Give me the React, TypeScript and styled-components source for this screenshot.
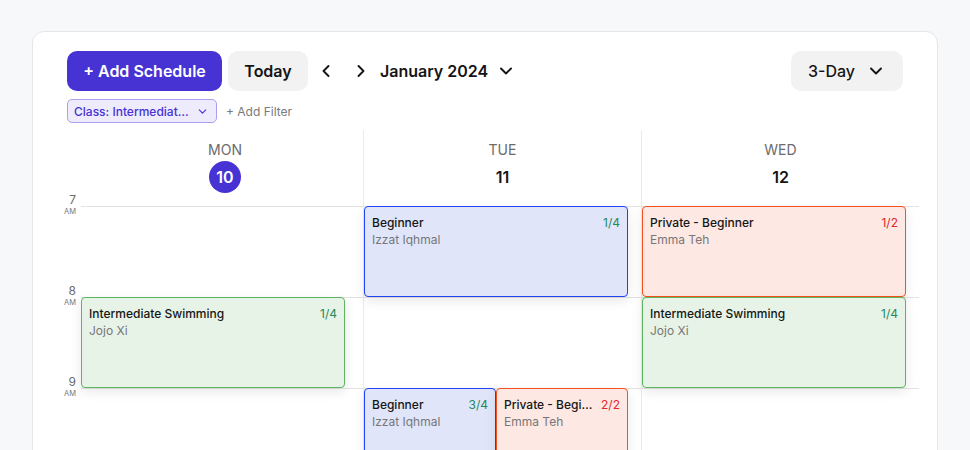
import React from 'react'
import styled, { createGlobalStyle } from 'styled-components'
import { ChevronDown, ChevronLeft, ChevronRight } from 'lucide-react'

type Tone = 'blue' | 'red' | 'green'

interface EventItem {
    title: string
    coach: string
    count: string
    tone: Tone
    countTone: 'green' | 'red'
}

interface Slot {
    row: number
    items: EventItem[]
}

interface Day {
    name: string
    date: string
    today?: boolean
    slots: Slot[]
}

const tones = {
    blue: { border: '#2143f2', bg: '#e0e5fa' },
    red: { border: '#f4511e', bg: '#fde8e3' },
    green: { border: '#5db562', bg: '#e8f3e7' },
}

const countColors = { green: '#1f8a5b', red: '#e1262d' }

const beginner: EventItem = { title: 'Beginner', coach: 'Izzat Iqhmal', count: '1/4', tone: 'blue', countTone: 'green' }
const swim: EventItem = { title: 'Intermediate Swimming', coach: 'Jojo Xi', count: '1/4', tone: 'green', countTone: 'green' }
const priv: EventItem = { title: 'Private - Beginner', coach: 'Emma Teh', count: '1/2', tone: 'red', countTone: 'red' }

const days: Day[] = [
    { name: 'Mon', date: '10', today: true, slots: [{ row: 2, items: [swim] }] },
    {
        name: 'Tue',
        date: '11',
        slots: [
            { row: 1, items: [beginner] },
            { row: 3, items: [{ ...beginner, count: '3/4' }, { ...priv, count: '2/2' }] },
        ],
    },
    { name: 'Wed', date: '12', slots: [{ row: 1, items: [priv] }, { row: 2, items: [swim] }] },
]

const hours = ['7', '8', '9', '10']

const App = () => {
    return (
        <>
            <GlobalStyle />
            <Card>
                <Toolbar>
                    <PrimaryButton>+ Add Schedule</PrimaryButton>
                    <GrayButton>Today</GrayButton>
                    <NavGroup>
                        <NavButton><ChevronLeft size={20} strokeWidth={2.3} /></NavButton>
                        <NavButton><ChevronRight size={20} strokeWidth={2.3} /></NavButton>
                    </NavGroup>
                    <MonthLabel>
                        January 2024
                        <ChevronDown size={20} strokeWidth={2.3} />
                    </MonthLabel>
                    <Spacer />
                    <ViewButton>
                        3-Day
                        <ChevronDown size={20} strokeWidth={2.3} />
                    </ViewButton>
                </Toolbar>
                <FilterRow>
                    <FilterChip>
                        <ChipText>Class: Intermediate Swimming</ChipText>
                        <ChevronDown size={13} strokeWidth={2} />
                    </FilterChip>
                    <AddFilter>+ Add Filter</AddFilter>
                </FilterRow>
                <Calendar>
                    <Gutter>
                        {hours.map(h => (
                            <HourLabel key={h}>
                                <HourNum>{h}</HourNum>
                                <HourAm>AM</HourAm>
                            </HourLabel>
                        ))}
                    </Gutter>
                    {days.map((d, i) => (
                        <DayColumn key={d.name} $divider={i > 0}>
                            <DayHeader $first={i === 0}>
                                <DayName>{d.name}</DayName>
                                <DayDate $today={d.today}>{d.date}</DayDate>
                            </DayHeader>
                            <DayBody>
                                {d.slots.map(s => (
                                    <SlotRow key={s.row} $row={s.row}>
                                        {s.items.map((e, j) => (
                                            <EventCard key={j} $tone={e.tone}>
                                                <EventTop>
                                                    <EventTitle>{e.title}</EventTitle>
                                                    <EventCount $tone={e.countTone}>{e.count}</EventCount>
                                                </EventTop>
                                                <EventCoach>{e.coach}</EventCoach>
                                            </EventCard>
                                        ))}
                                    </SlotRow>
                                ))}
                            </DayBody>
                        </DayColumn>
                    ))}
                </Calendar>
            </Card>
        </>
    )
}

const GlobalStyle = createGlobalStyle`
    html, body{
        margin:0;
        overflow:hidden;
        background:#f7f8fa;
        font-family: Inter, "Noto Sans", sans-serif;
    }
    body{
        padding:31px 32px 0 32px;
    }
    *{ box-sizing:border-box; }
`

const Card = styled.div`
    background:#fff;
    border:1px solid #e4e6ea;
    border-radius:12px;
    height:640px;
    padding:19px 34px 0 34px;
`
const Toolbar = styled.div`
    display:flex;
    align-items:center;
    height:40px;
`
const PrimaryButton = styled.button`
    height:40px;
    width:155px;
    border:none;
    border-radius:10px;
    background:#4733d4;
    color:#fff;
    font-family:inherit;
    font-size:16px;
    font-weight:600;
`
const GrayButton = styled.button`
    height:40px;
    width:80px;
    margin-left:6px;
    border:none;
    border-radius:10px;
    background:#f2f2f2;
    color:#151515;
    font-family:inherit;
    font-size:16px;
    font-weight:600;
`
const NavGroup = styled.div`
    display:flex;
    gap:7px;
    margin-left:4px;
`
const NavButton = styled.div`
    width:28px;
    height:40px;
    display:flex;
    align-items:center;
    justify-content:center;
    color:#151515;
`
const MonthLabel = styled.div`
    display:flex;
    align-items:center;
    gap:8px;
    margin-left:5px;
    font-size:16px;
    font-weight:600;
    color:#151515;
`
const Spacer = styled.div`
    flex:1;
`
const ViewButton = styled.div`
    height:40px;
    width:112px;
    display:flex;
    align-items:center;
    gap:11px;
    padding-left:17px;
    border-radius:10px;
    background:#f2f2f2;
    color:#151515;
    font-size:16px;
    font-weight:500;
`
const FilterRow = styled.div`
    display:flex;
    align-items:center;
    gap:9px;
    margin-top:8px;
    height:24px;
`
const FilterChip = styled.div`
    width:150px;
    height:24px;
    display:flex;
    align-items:center;
    gap:4px;
    padding:0 7px 0 6px;
    border:1px solid #a9a0ef;
    border-radius:5px;
    background:#eeebfc;
    color:#4733d4;
    font-size:12px;
    font-weight:500;
`
const ChipText = styled.span`
    flex:1;
    min-width:0;
    white-space:nowrap;
    overflow:hidden;
    text-overflow:ellipsis;
`
const AddFilter = styled.span`
    font-size:12px;
    color:#7a7a7a;
`
const Calendar = styled.div`
    display:grid;
    grid-template-columns:34px 282px 278px 278px;
    margin-top:7px;
    margin-left:-20px;
`
const Gutter = styled.div`
    display:flex;
    flex-direction:column;
    padding-top:63px;
`
const HourLabel = styled.div`
    height:91px;
    display:flex;
    flex-direction:column;
    align-items:flex-end;
    padding-right:5px;
    color:#6b6b6b;
`
const HourNum = styled.span`
    font-size:12px;
    line-height:14px;
`
const HourAm = styled.span`
    font-size:7.5px;
    line-height:10px;
    color:#777;
`
const DayColumn = styled.div<{ $divider: boolean }>`
    display:flex;
    flex-direction:column;
    border-left:${p => (p.$divider ? '1px solid #ebebeb' : 'none')};
`
const DayHeader = styled.div<{ $first: boolean }>`
    height:76px;
    display:flex;
    flex-direction:column;
    align-items:center;
    padding-top:10px;
    padding-left:${p => (p.$first ? '6px' : '0')};
    gap:1px;
`
const DayName = styled.span`
    font-size:14px;
    line-height:20px;
    text-transform:uppercase;
    color:#6b6b6b;
`
const DayDate = styled.span<{ $today?: boolean }>`
    width:32px;
    height:32px;
    border-radius:50%;
    display:flex;
    align-items:center;
    justify-content:center;
    font-size:16px;
    font-weight:600;
    background:${p => (p.$today ? '#4733d4' : 'transparent')};
    color:${p => (p.$today ? '#fff' : '#151515')};
`
const DayBody = styled.div`
    display:grid;
    grid-template-rows:repeat(4, 91px);
    background:repeating-linear-gradient(to bottom, #e3e3e3 0 1px, transparent 1px 91px);
`
const SlotRow = styled.div<{ $row: number }>`
    grid-row:${p => p.$row};
    width:264px;
    display:flex;
`
const EventCard = styled.div<{ $tone: Tone }>`
    flex:1;
    min-width:0;
    padding:7px 7px 0 7px;
    border:1px solid ${p => tones[p.$tone].border};
    background:${p => tones[p.$tone].bg};
    border-radius:4px;
    box-shadow:0 4px 12px rgba(0,0,0,0.09);
`
const EventTop = styled.div`
    display:flex;
    gap:6px;
    font-size:12px;
    line-height:17px;
`
const EventTitle = styled.span`
    flex:1;
    min-width:0;
    white-space:nowrap;
    overflow:hidden;
    text-overflow:ellipsis;
    color:#161616;
    font-weight:500;
`
const EventCount = styled.span<{ $tone: 'green' | 'red' }>`
    color:${p => countColors[p.$tone]};
`
const EventCoach = styled.div`
    font-size:12px;
    line-height:17px;
    color:#777;
`

export default App
